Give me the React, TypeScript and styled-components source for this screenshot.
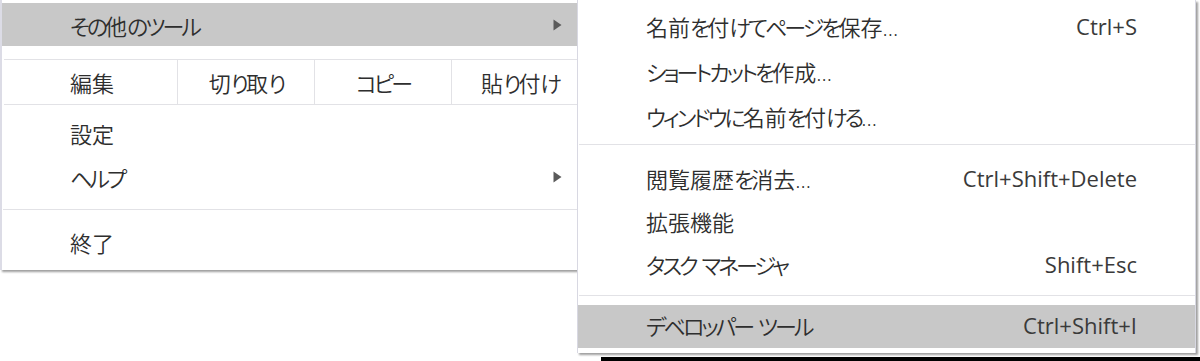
import React from "react";
import styled, { createGlobalStyle } from "styled-components";

const GlobalStyle = createGlobalStyle`
  html, body { margin: 0; padding: 0; background: #ffffff; }
  body {
    font-family: "Open Sans", "Noto Sans CJK JP", sans-serif;
  }
`;

const Stage = styled.div`
  position: relative;
  width: 1200px;
  height: 361px;
  overflow: hidden;
  background: #ffffff;
`;

const WindowBehind = styled.div`
  position: absolute;
  left: 601px;
  right: 0;
  top: 357px;
  height: 4px;
  background: #000000;
`;

const MainMenu = styled.div`
  position: relative;
  width: 590px;
  padding: 3px 0 4px;
  background: #ffffff;
  border-left: 2px solid #dcdce6;
  box-shadow: 2px 2px 2px rgba(0, 0, 0, 0.38);
  display: flex;
  flex-direction: column;
`;

const SubMenu = styled.div`
  position: absolute;
  left: 577px;
  top: 0;
  width: 617px;
  padding: 5px 0 5px;
  background: #ffffff;
  border-left: 1px solid #d8d8e2;
  border-right: 1px solid #d8d8e2;
  box-shadow: 2px 2px 2px rgba(0, 0, 0, 0.38);
  display: flex;
  flex-direction: column;
  z-index: 2;
`;

const Item = styled.div<{ $active?: boolean; $h?: number; $right?: number; $lift?: number }>`
  display: flex;
  align-items: center;
  box-sizing: border-box;
  height: ${(p) => p.$h ?? 44}px;
  padding: 0 ${(p) => p.$right ?? 30}px ${(p) => p.$lift ?? 4}px 68px;
  background: ${(p) => (p.$active ? "#c8c8c8" : "transparent")};
  color: #2e2e2e;
  font-size: 22px;
  white-space: nowrap;
`;

const Label = styled.span`
  flex: 1;
  font-weight: 350;
  font-feature-settings: "palt";
`;

const Kana = styled.span`
  letter-spacing: -3px;
`;

const Shortcut = styled.span`
  color: #3a3a3a;
  font-size: 22px;
`;

const Separator = styled.div<{ $above: number; $below: number }>`
  height: 1px;
  background: #e2e2e6;
  margin: ${(p) => p.$above}px 0 ${(p) => p.$below}px 1px;
`;

const Spacer = styled.div<{ $h: number }>`
  height: ${(p) => p.$h}px;
`;

const EditRow = styled.div`
  display: grid;
  grid-template-columns: 173px repeat(3, 137px);
  height: 44px;
  border-top: 1px solid #e2e2e6;
  border-bottom: 1px solid #e2e2e6;
  margin-left: 2px;
  color: #2e2e2e;
  font-size: 22px;
  font-weight: 350;
  font-feature-settings: "palt";
`;

const EditLabel = styled.div`
  display: flex;
  align-items: center;
  padding-left: 66px;
  padding-bottom: 1px;
`;

const EditButton = styled.div`
  display: flex;
  align-items: center;
  justify-content: center;
  padding-bottom: 1px;
  border-left: 1px solid #e2e2e6;
`;

const Arrow = () => (
  <svg width="9" height="12" viewBox="0 0 9 12">
    <path d="M0.5 0.5 L8.5 6 L0.5 11.5 Z" fill="#5a5a5a" />
  </svg>
);

// Kana in the reference font are proportional and narrow; tighten only them.
const JP = ({ text }: { text: string }) => {
  const parts = text.split(/([\u3040-\u30ff]+)/);
  return (
    <>
      {parts.map((part, i) =>
        /^[\u3040-\u30ff]+$/.test(part) ? <Kana key={i}>{part}</Kana> : <React.Fragment key={i}>{part}</React.Fragment>
      )}
    </>
  );
};

type SubEntry = { label: string; shortcut?: string };

const groupA: SubEntry[] = [
  { label: "名前を付けてページを保存...", shortcut: "Ctrl+S" },
  { label: "ショートカットを作成..." },
  { label: "ウィンドウに名前を付ける..." },
];

const groupB: SubEntry[] = [
  { label: "閲覧履歴を消去...", shortcut: "Ctrl+Shift+Delete" },
  { label: "拡張機能" },
  { label: "タスク マネージャ", shortcut: "Shift+Esc" },
];

export default function App() {
  return (
    <Stage>
      <GlobalStyle />
      <WindowBehind />
      <MainMenu>
        <Item $active $h={43} $lift={0}>
          <Label><JP text="その他のツール" /></Label>
          <Arrow />
        </Item>
        <Spacer $h={13} />
        <EditRow>
          <EditLabel>編集</EditLabel>
          <EditButton><JP text="切り取り" /></EditButton>
          <EditButton><JP text="コピー" /></EditButton>
          <EditButton><JP text="貼り付け" /></EditButton>
        </EditRow>
        <Spacer $h={8} />
        <Item>
          <Label>設定</Label>
        </Item>
        <Item>
          <Label><JP text="ヘルプ" /></Label>
          <Arrow />
        </Item>
        <Separator $above={8} $below={12} />
        <Item>
          <Label>終了</Label>
        </Item>
      </MainMenu>
      <SubMenu>
        {groupA.map((e) => (
          <Item key={e.label} $h={45} $right={58}>
            <Label><JP text={e.label} /></Label>
            {e.shortcut && <Shortcut>{e.shortcut}</Shortcut>}
          </Item>
        ))}
        <Separator $above={4} $below={13} />
        {groupB.map((e) => (
          <Item key={e.label} $h={43} $right={58}>
            <Label><JP text={e.label} /></Label>
            {e.shortcut && <Shortcut>{e.shortcut}</Shortcut>}
          </Item>
        ))}
        <Separator $above={8} $below={9} />
        <Item $active $h={43} $right={58}>
          <Label><JP text="デベロッパー ツール" /></Label>
          <Shortcut>Ctrl+Shift+I</Shortcut>
        </Item>
      </SubMenu>
    </Stage>
  );
}
